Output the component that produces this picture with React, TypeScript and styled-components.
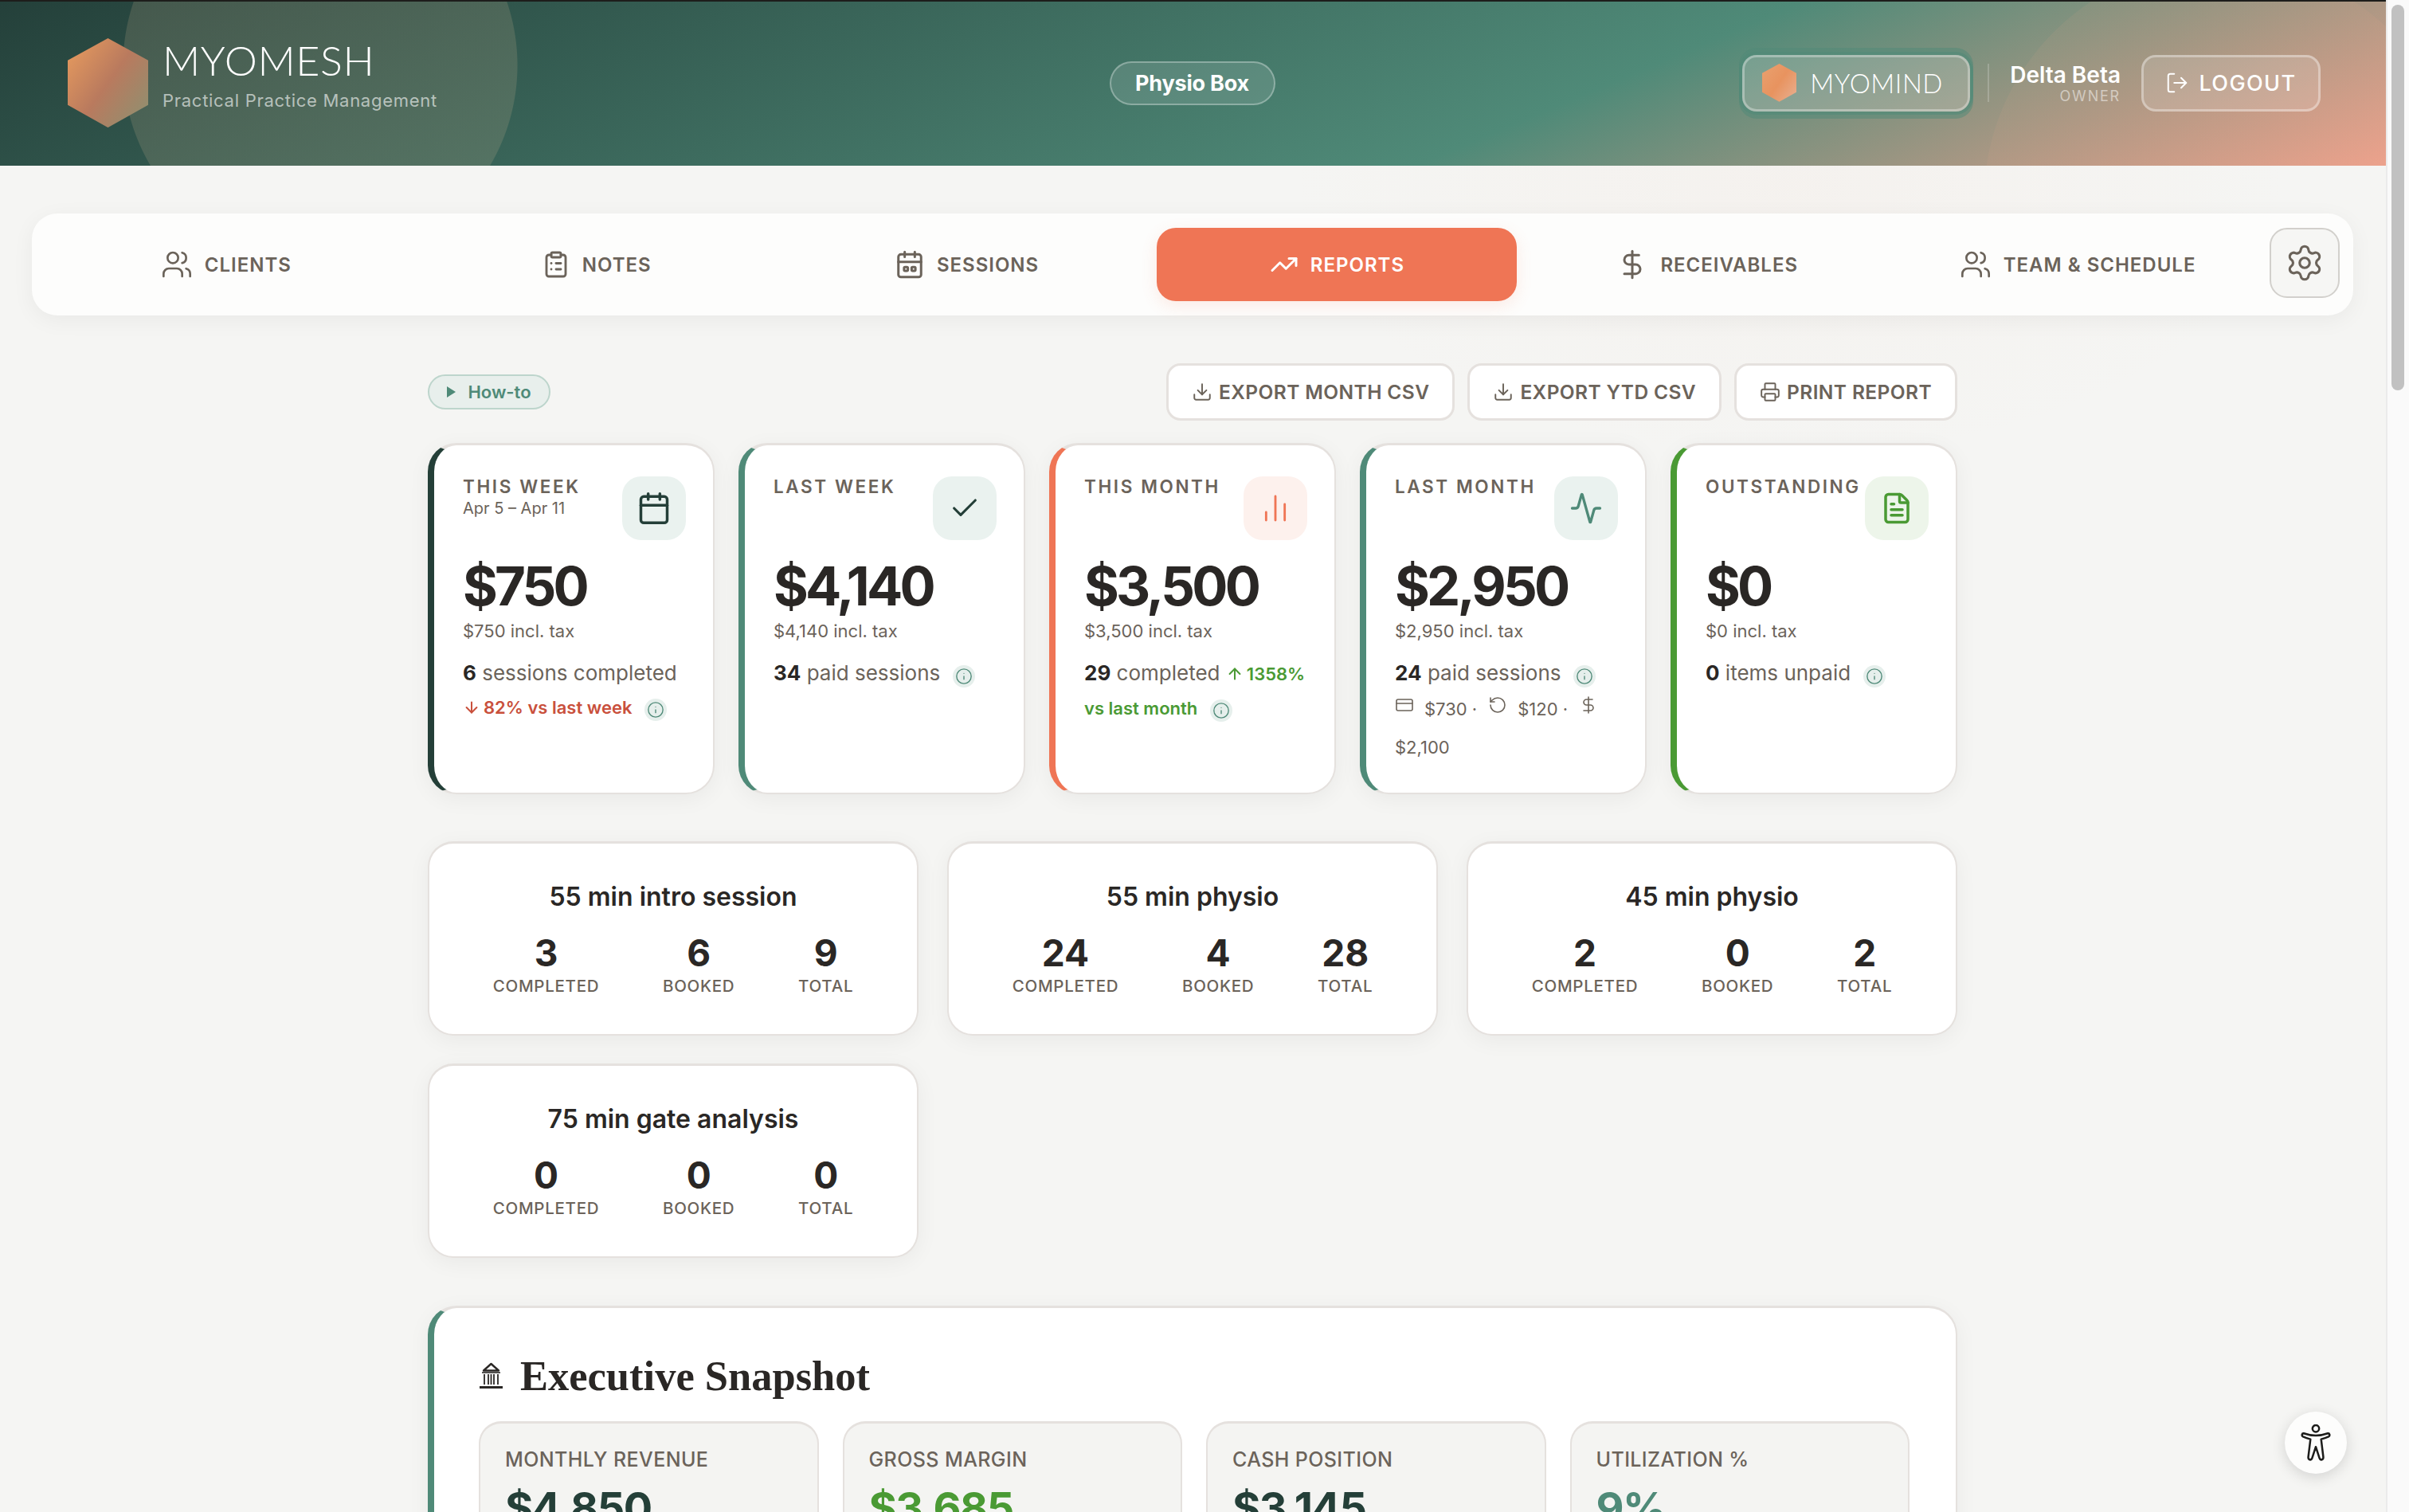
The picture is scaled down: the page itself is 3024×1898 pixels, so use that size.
import React from 'react';
import styled, { createGlobalStyle } from 'styled-components';
import {
  Activity,
  ArrowDown,
  ArrowUp,
  Calendar,
  ChartNoAxesColumn,
  Check,
  ClipboardList,
  CreditCard,
  DollarSign,
  Download,
  FileText,
  Info,
  LogOut,
  Printer,
  RotateCcw,
  Settings,
  TrendingUp,
  Users,
} from 'lucide-react';

const forest = '#243f38';
const teal = '#4f8a78';
const coral = '#ef7555';
const leaf = '#4a9a34';
const ink = '#2a2725';
const muted = '#6b635a';
const line = '#e5e1de';

const GlobalStyle = createGlobalStyle`
  html, body { margin: 0; height: 100%; overflow: hidden; }
  body { font-family: Inter, "Liberation Sans", sans-serif; background: #f5f5f3; color: ${ink}; }
  #root { height: 100vh; }
  * { box-sizing: border-box; }
`;

const Shell = styled.div`
  display: flex;
  height: 100vh;
  position: relative;
`;

const Main = styled.main`
  flex: 1;
  min-width: 0;
  overflow: hidden;
  background:
    radial-gradient(900px 500px at 75% 12%, rgba(240, 200, 180, 0.08), transparent 70%),
    #f5f5f3;
`;

const ScrollTrack = styled.div`
  width: 29px;
  flex-shrink: 0;
  background: #fafafa;
  border-left: 2px solid #ebebeb;
  padding: 6px 6px 0 5px;
`;

const ScrollThumb = styled.div`
  height: 484px;
  border-radius: 8px;
  background: #c1c1c1;
`;

const Header = styled.header`
  height: 208px;
  border-top: 2px solid #1d1d1b;
  padding: 0 82px 2px 85px;
  display: grid;
  grid-template-columns: 1fr auto 1fr;
  align-items: center;
  color: #fff;
  background:
    radial-gradient(circle 248px at 402px 80px, rgba(240, 200, 160, 0.15) 99.6%, transparent 100%),
    radial-gradient(circle 300px at 2790px 250px, rgba(240, 170, 140, 0.08) 99.7%, transparent 100%),
    linear-gradient(157deg, #24403a 0%, #4f8a78 65%, #eca18c 100%);
`;

const Brand = styled.div`
  display: flex;
  align-items: center;
  gap: 18px;
`;

const BrandText = styled.div`
  display: flex;
  flex-direction: column;
  gap: 7px;
  margin-top: -20px;
`;

const BrandName = styled.div`
  font-family: Lato, Inter, sans-serif;
  font-weight: 300;
  font-size: 52px;
  line-height: 58px;
  letter-spacing: 0.6px;
`;

const BrandTag = styled.div`
  font-size: 22px;
  line-height: 30px;
  letter-spacing: 0.72px;
  color: rgba(255, 255, 255, 0.6);
`;

const RolePill = styled.div`
  height: 55px;
  width: 208px;
  margin-right: 5px;
  border-radius: 28px;
  border: 2px solid rgba(255, 255, 255, 0.3);
  background: rgba(255, 255, 255, 0.12);
  display: flex;
  align-items: center;
  justify-content: center;
  font-size: 27px;
  font-weight: 700;
  letter-spacing: -0.2px;
`;

const HeaderRight = styled.div`
  display: flex;
  align-items: center;
  justify-content: flex-end;
  gap: 26px;
`;

const MindButton = styled.div`
  width: 286px;
  height: 71px;
  margin-right: -4px;
  border-radius: 18px;
  border: 3px solid rgba(255, 255, 255, 0.32);
  background: rgba(255, 255, 255, 0.17);
  box-shadow: 0 0 0 4px rgba(79, 138, 120, 0.5), 0 5px 0 4px rgba(79, 138, 120, 0.5), 0 -5px 0 4px rgba(79, 138, 120, 0.5);
  display: flex;
  align-items: center;
  gap: 17px;
  padding-left: 22px;
`;

const MindLabel = styled.span`
  font-family: Lato, Inter, sans-serif;
  font-weight: 300;
  font-size: 33px;
  letter-spacing: 0.5px;
`;

const VLine = styled.div`
  width: 2px;
  height: 48px;
  background: rgba(255, 255, 255, 0.2);
`;

const UserBox = styled.div`
  text-align: right;
`;

const UserName = styled.div`
  font-size: 28px;
  line-height: 34px;
  font-weight: 600;
`;

const UserRole = styled.div`
  font-size: 18px;
  line-height: 20px;
  letter-spacing: 1.8px;
  color: rgba(255, 255, 255, 0.5);
`;

const LogoutButton = styled.div`
  width: 225px;
  height: 71px;
  border-radius: 18px;
  border: 3px solid rgba(255, 255, 255, 0.35);
  background: rgba(255, 255, 255, 0.14);
  display: flex;
  align-items: center;
  justify-content: center;
  gap: 12px;
  font-size: 27px;
  font-weight: 500;
  letter-spacing: 1.4px;
`;

const Nav = styled.nav`
  margin: 60px 41px 0 40px;
  height: 128px;
  padding: 18px 17px 18px 18px;
  border-radius: 32px;
  background: #fdfdfc;
  box-shadow: 0 6px 28px rgba(0, 0, 0, 0.05);
  display: flex;
  align-items: flex-start;
  gap: 13px;
`;

const Tab = styled.div<{ $active?: boolean }>`
  flex: 1;
  height: 92px;
  border-radius: 24px;
  display: flex;
  align-items: center;
  justify-content: center;
  gap: 15px;
  font-size: 24px;
  font-weight: 600;
  letter-spacing: 1px;
  color: ${(p) => (p.$active ? '#fff' : muted)};
  background: ${(p) => (p.$active ? coral : 'transparent')};
  box-shadow: ${(p) => (p.$active ? '0 6px 20px rgba(240, 117, 85, 0.14)' : 'none')};
`;

const GearButton = styled.div`
  width: 88px;
  height: 88px;
  flex-shrink: 0;
  margin-left: 2px;
  border-radius: 22px;
  border: 2px solid #d2d0cc;
  background: #f6f6f4;
  color: ${muted};
  display: flex;
  align-items: center;
  justify-content: center;
`;

const Content = styled.div`
  margin: 60px 538px 0 537px;
`;

const Toolbar = styled.div`
  height: 72px;
  display: flex;
  align-items: center;
  justify-content: space-between;
`;

const HowTo = styled.div`
  width: 154px;
  height: 44px;
  border-radius: 22px;
  border: 2px solid #bdd5cc;
  background: #e8efec;
  color: ${teal};
  display: flex;
  align-items: center;
  justify-content: center;
  gap: 15px;
  font-size: 22px;
  font-weight: 600;
`;

const ToolbarActions = styled.div`
  display: flex;
  gap: 16px;
`;

const ActionButton = styled.div`
  height: 72px;
  padding: 0 29px;
  border-radius: 18px;
  border: 3px solid ${line};
  background: #fff;
  color: ${muted};
  display: flex;
  align-items: center;
  gap: 8px;
  font-size: 24.5px;
  font-weight: 600;
  letter-spacing: 0.4px;
`;

const StatGrid = styled.div`
  margin-top: 28px;
  display: grid;
  grid-template-columns: repeat(5, minmax(0, 1fr));
  gap: 30px;
`;

const StatCard = styled.div<{ $accent: string }>`
  height: 441px;
  background: #fff;
  border-radius: 36px;
  border: 2px solid ${line};
  border-top-width: 3px;
  border-left: 8px solid ${(p) => p.$accent};
  box-shadow: 0 6px 28px rgba(0, 0, 0, 0.05);
  padding: 39px 34px 0 36px;
`;

const StatHead = styled.div`
  display: flex;
  justify-content: space-between;
  align-items: flex-start;
  gap: 4px;
  height: 80px;
`;

const StatLabel = styled.div`
  font-size: 22.5px;
  line-height: 26px;
  font-weight: 600;
  letter-spacing: 2.6px;
  color: ${muted};
  white-space: nowrap;
`;

const StatRange = styled.div`
  font-size: 20px;
  line-height: 28px;
  color: ${muted};
`;

const IconTile = styled.div<{ $tint: string; $fg: string }>`
  width: 80px;
  height: 80px;
  flex-shrink: 0;
  border-radius: 24px;
  background: ${(p) => p.$tint};
  color: ${(p) => p.$fg};
  display: flex;
  align-items: center;
  justify-content: center;
`;

const StatValue = styled.div`
  margin-top: 16px;
  font-size: 67px;
  line-height: 84px;
  font-weight: 700;
  letter-spacing: -3.8px;
  color: ${ink};
`;

const StatTax = styled.div`
  font-size: 22px;
  line-height: 32px;
  color: ${muted};
  margin-top: -2px;
`;

const StatSummary = styled.div`
  margin-top: 16px;
  font-size: 26px;
  line-height: 42px;
  color: ${muted};

  b {
    font-weight: 700;
    color: ${ink};
  }
`;

const Trend = styled.span<{ $color: string }>`
  font-size: 22px;
  font-weight: 600;
  color: ${(p) => p.$color};

  svg {
    vertical-align: -3px;
    margin-right: 4px;
  }
`;

const InfoDot = styled.span`
  display: inline-flex;
  align-items: center;
  justify-content: center;
  width: 28px;
  height: 28px;
  border-radius: 50%;
  margin-left: 16px;
  vertical-align: -6px;
  background: #e6efec;
  color: ${teal};
`;

const Breakdown = styled.div`
  font-size: 22px;
  line-height: 48px;
  color: ${muted};

  svg {
    vertical-align: 1px;
    margin-right: 13px;
  }
`;

const BreakItem = styled.span`
  margin-right: 14px;
`;

const SessionGrid = styled.div`
  margin-top: 59px;
  display: grid;
  grid-template-columns: repeat(3, minmax(0, 1fr));
  gap: 35px 36px;
`;

const SessionCard = styled.div`
  height: 244px;
  background: #fff;
  border-radius: 32px;
  border: 2px solid ${line};
  border-top-width: 3px;
  box-shadow: 0 6px 28px rgba(0, 0, 0, 0.05);
  padding-top: 47px;
`;

const SessionTitle = styled.div`
  text-align: center;
  font-size: 32px;
  line-height: 40px;
  font-weight: 600;
  color: ${ink};
`;

const SessionStats = styled.div`
  margin-top: 24px;
  display: flex;
  justify-content: space-evenly;
`;

const SessionStat = styled.div`
  text-align: center;
`;

const SessionNumber = styled.div`
  font-size: 46px;
  line-height: 52px;
  font-weight: 700;
  color: ${ink};
`;

const SessionLabel = styled.div`
  margin-top: 3px;
  font-size: 20.5px;
  line-height: 26px;
  font-weight: 500;
  letter-spacing: 0.7px;
  color: ${muted};
`;

const Snapshot = styled.section`
  margin-top: 60px;
  background: #fff;
  border-radius: 36px;
  border: 2px solid ${line};
  border-top-width: 3px;
  border-left: 8px solid ${teal};
  box-shadow: 0 6px 28px rgba(0, 0, 0, 0.05);
  padding: 53px 58px 60px 56px;
`;

const SnapshotTitle = styled.h2`
  margin: 0;
  display: flex;
  align-items: center;
  gap: 21px;
  height: 64px;
  font-family: "Liberation Serif", serif;
  font-size: 52.5px;
  font-weight: 700;
  color: ${ink};
`;

const MetricGrid = styled.div`
  margin-top: 25px;
  display: grid;
  grid-template-columns: repeat(4, minmax(0, 1fr));
  gap: 30px;
`;

const MetricCard = styled.div`
  background: #f4f4f2;
  border-radius: 28px;
  border: 2px solid ${line};
  border-top-width: 3px;
  padding: 29px 31px 28px;
`;

const MetricLabel = styled.div`
  font-size: 25px;
  line-height: 32px;
  font-weight: 500;
  letter-spacing: 0.4px;
  color: ${muted};
`;

const MetricValue = styled.div<{ $color: string }>`
  margin-top: 7px;
  font-size: 54px;
  line-height: 76px;
  font-weight: 700;
  letter-spacing: -1.5px;
  color: ${(p) => p.$color};
`;

const A11yButton = styled.div`
  position: absolute;
  right: 78px;
  bottom: 48px;
  width: 78px;
  height: 78px;
  border-radius: 50%;
  background: #fdfdfc;
  box-shadow: 0 4px 18px rgba(0, 0, 0, 0.14);
  display: flex;
  align-items: center;
  justify-content: center;
`;

const Hexagon = ({ size, id, from, mid, to }: { size: number; id: string; from: string; mid: string; to: string }) => (
  <svg width={size} height={size * 1.11} viewBox="0 0 100 111" style={{ flexShrink: 0 }}>
    <defs>
      <linearGradient id={id} x1="0" y1="0.1" x2="1" y2="0.9">
        <stop offset="0" stopColor={from} />
        <stop offset="0.5" stopColor={mid} />
        <stop offset="1" stopColor={to} />
      </linearGradient>
    </defs>
    <polygon points="50,0 100,27.5 100,83 50,111 0,83 0,27.5" fill={`url(#${id})`} />
  </svg>
);

const SessionsIcon = () => (
  <svg width="38" height="38" viewBox="0 0 24 24" fill="none" stroke="currentColor" strokeWidth="1.9" strokeLinecap="round" strokeLinejoin="round">
    <path d="M8 2v4M16 2v4" />
    <rect x="3" y="4" width="18" height="18" rx="2" />
    <path d="M3 10h18" />
    <rect x="7.5" y="14" width="3" height="3" rx="0.8" />
    <rect x="13.5" y="14" width="3" height="3" rx="0.8" />
  </svg>
);

const BankIcon = () => (
  <svg width="31" height="34" viewBox="0 0 31 34" fill="none" stroke={ink}>
    <path d="M15.5 2 L25 10.5 H6 Z" strokeWidth="2.4" strokeLinejoin="round" />
    <path d="M4 13 H27" strokeWidth="1.6" />
    <path d="M7 15v13M12 15v13M15.5 15v13M19 15v13M24 15v13" strokeWidth="1.8" />
    <path d="M1 31.5 H30" strokeWidth="3" />
  </svg>
);

const PersonIcon = () => (
  <svg width="38" height="46" viewBox="0 0 36 44" fill="none" stroke="#1d1d1b" strokeWidth="2.4" strokeLinejoin="round" strokeLinecap="round">
    <circle cx="18" cy="5" r="4" />
    <path d="M3.5 10.8 C8 12.4 13 13.4 18 13.4 C23 13.4 28 12.4 32.5 10.8 C34.6 10.4 35.4 13.6 33.4 14.6 C30.4 16 27.4 17 24.4 17.8 L27 39 C27.4 42.8 23.4 43.6 22.4 40.6 L18 27 L13.6 40.6 C12.6 43.6 8.6 42.8 9 39 L11.6 17.8 C8.6 17 5.6 16 2.6 14.6 C0.6 13.6 1.4 10.4 3.5 10.8 Z" />
  </svg>
);

const InfoMark = () => (
  <InfoDot>
    <Info size={22} strokeWidth={1.5} />
  </InfoDot>
);

const tabs = [
  { label: 'CLIENTS', icon: <Users size={40} strokeWidth={1.6} /> },
  { label: 'NOTES', icon: <ClipboardList size={36} strokeWidth={1.9} /> },
  { label: 'SESSIONS', icon: <SessionsIcon /> },
  { label: 'REPORTS', icon: <TrendingUp size={36} strokeWidth={2} />, active: true },
  { label: 'RECEIVABLES', icon: <DollarSign size={40} strokeWidth={1.8} /> },
  { label: 'TEAM & SCHEDULE', icon: <Users size={40} strokeWidth={1.6} /> },
];

const sessionTypes = [
  { title: '55 min intro session', done: 3, booked: 6, total: 9 },
  { title: '55 min physio', done: 24, booked: 4, total: 28 },
  { title: '45 min physio', done: 2, booked: 0, total: 2 },
  { title: '75 min gate analysis', done: 0, booked: 0, total: 0 },
];

const metrics = [
  { label: 'MONTHLY REVENUE', value: '$4,850', color: forest },
  { label: 'GROSS MARGIN', value: '$3,685', color: leaf },
  { label: 'CASH POSITION', value: '$3,145', color: forest },
  { label: 'UTILIZATION %', value: '9%', color: teal },
];

const App: React.FC = () => (
  <Shell>
    <GlobalStyle />
    <Main>
      <Header>
        <Brand>
          <Hexagon size={101} id="brandHex" from="#e69a5e" mid="#b97a5e" to="#8f9070" />
          <BrandText>
            <BrandName>MYOMESH</BrandName>
            <BrandTag>Practical Practice Management</BrandTag>
          </BrandText>
        </Brand>
        <RolePill>Physio Box</RolePill>
        <HeaderRight>
          <MindButton>
            <Hexagon size={43} id="mindHex" from="#e9a06e" mid="#e8935f" to="#e9ae8e" />
            <MindLabel>MYOMIND</MindLabel>
          </MindButton>
          <VLine />
          <UserBox>
            <UserName>Delta Beta</UserName>
            <UserRole>OWNER</UserRole>
          </UserBox>
          <LogoutButton>
            <LogOut size={30} strokeWidth={1.6} />
            LOGOUT
          </LogoutButton>
        </HeaderRight>
      </Header>

      <Nav>
        {tabs.map((t) => (
          <Tab key={t.label} $active={t.active}>
            {t.icon}
            {t.label}
          </Tab>
        ))}
        <GearButton>
          <Settings size={50} strokeWidth={1.5} />
        </GearButton>
      </Nav>

      <Content>
        <Toolbar>
          <HowTo>
            <svg width="11" height="14" viewBox="0 0 11 14">
              <path d="M0 0 L11 7 L0 14 Z" fill={teal} />
            </svg>
            How-to
          </HowTo>
          <ToolbarActions>
            <ActionButton>
              <Download size={26} strokeWidth={1.8} />
              EXPORT MONTH CSV
            </ActionButton>
            <ActionButton>
              <Download size={26} strokeWidth={1.8} />
              EXPORT YTD CSV
            </ActionButton>
            <ActionButton>
              <Printer size={26} strokeWidth={1.8} />
              PRINT REPORT
            </ActionButton>
          </ToolbarActions>
        </Toolbar>

        <StatGrid>
          <StatCard $accent={forest}>
            <StatHead>
              <div>
                <StatLabel>THIS WEEK</StatLabel>
                <StatRange>Apr 5 – Apr 11</StatRange>
              </div>
              <IconTile $tint="#eaf2ef" $fg={forest}>
                <Calendar size={44} strokeWidth={1.9} />
              </IconTile>
            </StatHead>
            <StatValue>$750</StatValue>
            <StatTax>$750 incl. tax</StatTax>
            <StatSummary>
              <b>6</b> sessions completed{' '}
              <Trend $color="#c9503c">
                <ArrowDown size={22} strokeWidth={2.2} />
                82% vs last week
              </Trend>
              <InfoMark />
            </StatSummary>
          </StatCard>

          <StatCard $accent={teal}>
            <StatHead>
              <StatLabel>LAST WEEK</StatLabel>
              <IconTile $tint="#eaf2ef" $fg={forest}>
                <Check size={40} strokeWidth={1.9} />
              </IconTile>
            </StatHead>
            <StatValue>$4,140</StatValue>
            <StatTax>$4,140 incl. tax</StatTax>
            <StatSummary>
              <b>34</b> paid sessions
              <InfoMark />
            </StatSummary>
          </StatCard>

          <StatCard $accent={coral}>
            <StatHead>
              <StatLabel>THIS MONTH</StatLabel>
              <IconTile $tint="#fdf1ed" $fg={coral}>
                <ChartNoAxesColumn size={40} strokeWidth={1.7} />
              </IconTile>
            </StatHead>
            <StatValue>$3,500</StatValue>
            <StatTax>$3,500 incl. tax</StatTax>
            <StatSummary>
              <b>29</b> completed{' '}
              <Trend $color={leaf}>
                <ArrowUp size={22} strokeWidth={2.2} />
                1358% vs last month
              </Trend>
              <InfoMark />
            </StatSummary>
          </StatCard>

          <StatCard $accent={teal}>
            <StatHead>
              <StatLabel>LAST MONTH</StatLabel>
              <IconTile $tint="#eaf2ef" $fg={teal}>
                <Activity size={42} strokeWidth={1.9} />
              </IconTile>
            </StatHead>
            <StatValue>$2,950</StatValue>
            <StatTax>$2,950 incl. tax</StatTax>
            <StatSummary>
              <b>24</b> paid sessions
              <InfoMark />
            </StatSummary>
            <Breakdown>
              <BreakItem>
                <CreditCard size={24} strokeWidth={1.6} />
                $730 ·
              </BreakItem>
              <BreakItem>
                <RotateCcw size={24} strokeWidth={1.6} />
                $120 ·
              </BreakItem>
              <BreakItem>
                <DollarSign size={24} strokeWidth={1.6} />
                $2,100
              </BreakItem>
            </Breakdown>
          </StatCard>

          <StatCard $accent={leaf}>
            <StatHead>
              <StatLabel>OUTSTANDING</StatLabel>
              <IconTile $tint="#edf5ea" $fg={leaf}>
                <FileText size={42} strokeWidth={2} />
              </IconTile>
            </StatHead>
            <StatValue>$0</StatValue>
            <StatTax>$0 incl. tax</StatTax>
            <StatSummary>
              <b>0</b> items unpaid
              <InfoMark />
            </StatSummary>
          </StatCard>
        </StatGrid>

        <SessionGrid>
          {sessionTypes.map((s) => (
            <SessionCard key={s.title}>
              <SessionTitle>{s.title}</SessionTitle>
              <SessionStats>
                <SessionStat>
                  <SessionNumber>{s.done}</SessionNumber>
                  <SessionLabel>COMPLETED</SessionLabel>
                </SessionStat>
                <SessionStat>
                  <SessionNumber>{s.booked}</SessionNumber>
                  <SessionLabel>BOOKED</SessionLabel>
                </SessionStat>
                <SessionStat>
                  <SessionNumber>{s.total}</SessionNumber>
                  <SessionLabel>TOTAL</SessionLabel>
                </SessionStat>
              </SessionStats>
            </SessionCard>
          ))}
        </SessionGrid>

        <Snapshot>
          <SnapshotTitle>
            <BankIcon />
            Executive Snapshot
          </SnapshotTitle>
          <MetricGrid>
            {metrics.map((m) => (
              <MetricCard key={m.label}>
                <MetricLabel>{m.label}</MetricLabel>
                <MetricValue $color={m.color}>{m.value}</MetricValue>
              </MetricCard>
            ))}
          </MetricGrid>
        </Snapshot>
      </Content>
    </Main>
    <ScrollTrack>
      <ScrollThumb />
    </ScrollTrack>
    <A11yButton>
      <PersonIcon />
    </A11yButton>
  </Shell>
);

export default App;
